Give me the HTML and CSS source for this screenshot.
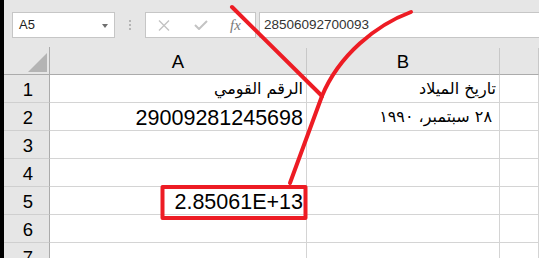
FILE: index.html
```html
<!DOCTYPE html>
<html>
<head>
  <meta charset="utf-8">
  <title>Excel - A5</title>
  <link rel="stylesheet" href="styles.css">
</head>
<body>
  <div class="excel">
    <div class="toolbar">
      <div class="namebox">
        <span>A5</span>
        <span class="caret"></span>
      </div>
      <div class="grip"><i></i><i></i><i></i></div>
      <div class="fxbox">
        <svg class="cancel" width="12" height="11" viewBox="0 0 12 11">
          <path d="M1 0.5 L11 10.5 M11 0.5 L1 10.5" stroke="#c3c3c3" stroke-width="1.4" fill="none"/>
        </svg>
        <svg class="enter" width="14" height="10" viewBox="0 0 14 10">
          <path d="M1 5 L5 9 L13 1" stroke="#c3c3c3" stroke-width="2" fill="none"/>
        </svg>
        <span class="fx">fx</span>
      </div>
      <div class="formula">28506092700093</div>
    </div>

    <div class="sheet">
      <div class="corner">
        <svg width="19" height="19" viewBox="0 0 19 19"><polygon points="0,19 19,19 19,0" fill="#b4b4b4"/></svg>
      </div>
      <div class="colhead">A</div>
      <div class="colhead">B</div>
      <div class="colhead"></div>

      <div class="rowhead">1</div>
      <div class="cell ar">الرقم القومي</div>
      <div class="cell ar">تاريخ الميلاد</div>
      <div class="cell"></div>

      <div class="rowhead">2</div>
      <div class="cell">29009281245698</div>
      <div class="cell ar date">٢٨ سبتمبر، ١٩٩٠</div>
      <div class="cell"></div>

      <div class="rowhead">3</div>
      <div class="cell"></div>
      <div class="cell"></div>
      <div class="cell"></div>

      <div class="rowhead">4</div>
      <div class="cell"></div>
      <div class="cell"></div>
      <div class="cell"></div>

      <div class="rowhead">5</div>
      <div class="cell">2.85061E+13</div>
      <div class="cell"></div>
      <div class="cell"></div>

      <div class="rowhead">6</div>
      <div class="cell"></div>
      <div class="cell"></div>
      <div class="cell"></div>

      <div class="rowhead">7</div>
      <div class="cell"></div>
      <div class="cell"></div>
      <div class="cell"></div>
    </div>

    <!-- hand drawn red marks on top of the screenshot -->
    <svg class="marks" width="539" height="258" viewBox="0 0 539 258">
      <g stroke="#ed1c24" stroke-width="4" fill="none" stroke-linecap="round" stroke-linejoin="round">
        <path d="M232 7 L322 96"/>
        <path d="M411 12 C376 25 339 55 322 96"/>
        <path d="M322 96 L290 183"/>
        <rect x="162.5" y="187" width="143" height="31"/>
      </g>
    </svg>
  </div>
</body>
</html>
```

FILE: styles.css
```css
* {
  box-sizing: border-box;
}

body {
  margin: 0;
  background: #e6e6e6;
  font-family: "Liberation Sans", Arial, sans-serif;
  color: #000;
}

.excel {
  position: relative;
  width: 539px;
  height: 258px;
  overflow: hidden;
  border-left: 4px solid #000;
  background: #e6e6e6;
}

/* formula bar */
.toolbar {
  height: 47px;
  display: flex;
  align-items: flex-start;
  padding: 12px 0 0 8px;
}

.namebox,
.fxbox,
.formula {
  height: 26px;
  background: #fff;
  border: 1px solid #c6c6c6;
}

.namebox {
  width: 103px;
  display: flex;
  align-items: center;
  justify-content: space-between;
  padding: 0 6px 0 6px;
  font-size: 13px;
  line-height: 24px;
  color: #222;
}

.caret {
  width: 0;
  height: 0;
  border-left: 3.5px solid transparent;
  border-right: 3.5px solid transparent;
  border-top: 4px solid #6f6f6f;
  margin-top: 1px;
}

.grip {
  width: 30px;
  display: flex;
  flex-direction: column;
  align-items: center;
  gap: 2px;
  padding-top: 8px;
}

.grip i {
  display: block;
  width: 2px;
  height: 2px;
  background: #b5b5b5;
}

.fxbox {
  width: 111px;
  display: flex;
  align-items: center;
  padding-left: 12px;
}

.cancel {
  margin-top: 1px;
}

.enter {
  margin-left: 24px;
}

.fx {
  margin-left: 22px;
  font-family: "Liberation Serif", serif;
  font-style: italic;
  font-size: 15px;
  color: #7a7a7a;
}

.formula {
  flex: 1;
  margin-left: 3px;
  margin-right: -4px;
  padding-left: 4px;
  font-size: 13.5px;
  line-height: 24px;
  color: #333;
}

/* sheet grid */
.sheet {
  display: grid;
  grid-template-columns: 46px 257px 193px 1fr;
  grid-auto-rows: 28px;
}

.corner {
  display: flex;
  align-items: flex-end;
  justify-content: flex-end;
  padding: 0 2px 2px 0;
  border-right: 1px solid #ababab;
  border-bottom: 1px solid #ababab;
}

.colhead {
  background: #e6e6e6;
  border-right: 1px solid #c8c8c8;
  border-bottom: 1px solid #ababab;
  margin-top: 1px;
  padding-top: 2px;
  text-align: center;
  font-size: 18.5px;
  line-height: 24px;
}

.rowhead {
  background: #e6e6e6;
  border-right: 1px solid #ababab;
  border-bottom: 1px solid #cfcfcf;
  padding: 3px 0 0 3px;
  text-align: center;
  font-size: 18.5px;
  line-height: 24px;
}

.cell {
  background: #fff;
  border-right: 1px solid #d4d4d4;
  border-bottom: 1px solid #d4d4d4;
  padding: 3px 3px 0 0;
  text-align: right;
  font-size: 21.5px;
  line-height: 24px;
  white-space: nowrap;
}

.ar {
  direction: rtl;
  text-align: start;
  padding: 2px 0 0 0;
  padding-right: 3px;
  font-family: "DejaVu Sans", sans-serif;
  font-size: 16px;
}

.ar.date {
  padding-right: 7px;
}

.marks {
  position: absolute;
  top: 0;
  left: -4px;
  pointer-events: none;
}
```
